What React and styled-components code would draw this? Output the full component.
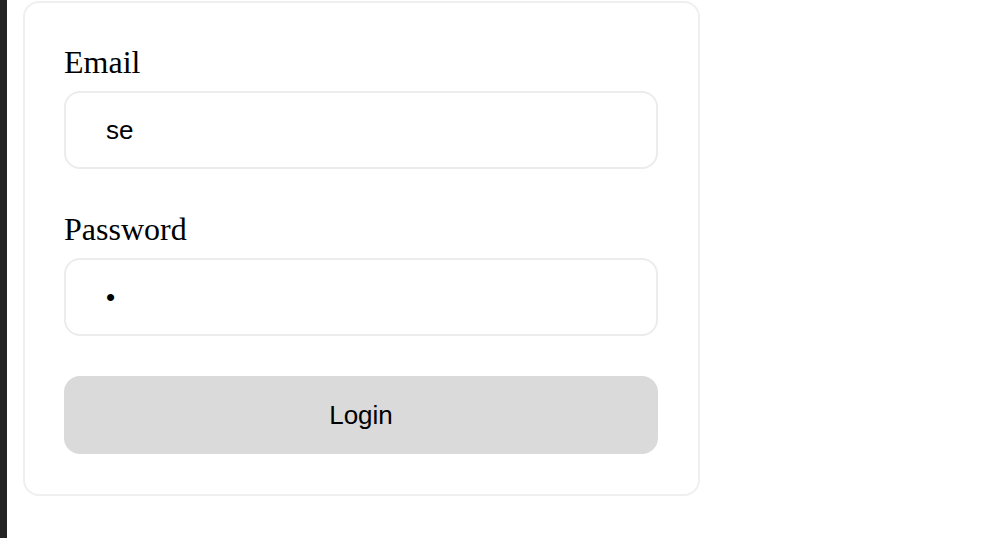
import React from 'react';
import styled, { createGlobalStyle } from 'styled-components';

const GlobalStyle = createGlobalStyle`
  html, body {
    margin: 0;
    padding: 0;
    background: #ffffff;
    overflow: hidden;
  }
  * {
    box-sizing: border-box;
  }
`;

const Page = styled.div`
  display: flex;
  height: 538px;
  background: #ffffff;
`;

const EdgeBar = styled.div`
  width: 7px;
  flex-shrink: 0;
  background: #232323;
`;

const Content = styled.main`
  padding: 1px 0 0 16px;
`;

const Card = styled.form`
  width: 677px;
  display: flex;
  flex-direction: column;
  gap: 40px;
  padding: 39px 40px 40px 39px;
  border: 2px solid #efefef;
  border-radius: 16px;
  background: #ffffff;
`;

const Field = styled.div`
  display: flex;
  flex-direction: column;
  gap: 10px;
`;

const Label = styled.label`
  padding-top: 2px;
  font-family: 'Liberation Serif', 'Times New Roman', serif;
  font-size: 32px;
  color: #000000;
`;

const Input = styled.input`
  width: 100%;
  height: 78px;
  padding: 0 40px;
  border: 2px solid #ececec;
  border-radius: 16px;
  background: #ffffff;
  font-family: 'Liberation Sans', Arial, sans-serif;
  font-size: 26px;
  color: #000000;
  outline: none;
`;

const Button = styled.button`
  width: 100%;
  height: 78px;
  border: none;
  border-radius: 16px;
  background: #dadada;
  font-family: 'Liberation Sans', Arial, sans-serif;
  font-size: 26px;
  color: #000000;
  cursor: pointer;
`;

const App = () => {
  return (
    <>
      <GlobalStyle />
      <Page>
        <EdgeBar />
        <Content>
          <Card onSubmit={(e) => e.preventDefault()}>
            <Field>
              <Label htmlFor="email">Email</Label>
              <Input id="email" type="text" defaultValue="se" />
            </Field>
            <Field>
              <Label htmlFor="password">Password</Label>
              <Input id="password" type="password" defaultValue="a" />
            </Field>
            <Button type="submit">Login</Button>
          </Card>
        </Content>
      </Page>
    </>
  );
};

export default App;
